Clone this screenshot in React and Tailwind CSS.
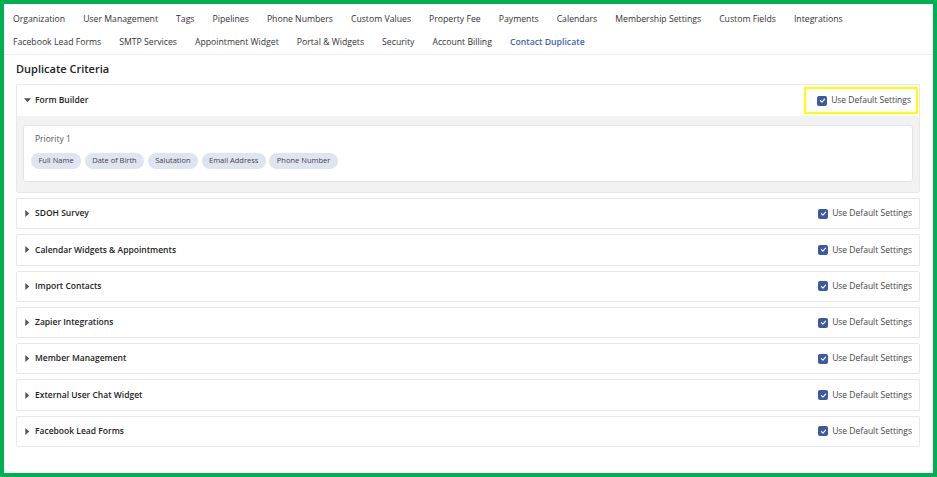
import React from 'react';

const tabsRow1 = ['Organization', 'User Management', 'Tags', 'Pipelines', 'Phone Numbers', 'Custom Values', 'Property Fee', 'Payments', 'Calendars', 'Membership Settings', 'Custom Fields', 'Integrations'];
const tabsRow2 = ['Facebook Lead Forms', 'SMTP Services', 'Appointment Widget', 'Portal & Widgets', 'Security', 'Account Billing', 'Contact Duplicate'];

const sections = ['SDOH Survey', 'Calendar Widgets & Appointments', 'Import Contacts', 'Zapier Integrations', 'Member Management', 'External User Chat Widget', 'Facebook Lead Forms'];

const chips = ['Full Name', 'Date of Birth', 'Salutation', 'Email Address', 'Phone Number'];

const Check = () => (
  <span className="w-[10px] h-[10px] rounded-[2px] bg-[#3d5a9e] flex items-center justify-center">
    <svg width="7" height="7" viewBox="0 0 10 10">
      <path d="M2 5.2 L4.2 7.3 L8 3" stroke="white" strokeWidth="1.6" fill="none" strokeLinecap="round" strokeLinejoin="round" />
    </svg>
  </span>
);

const DefaultToggle = () => (
  <div className="flex items-center gap-[4px]">
    <Check />
    <span className="text-[8.5px] text-[#444]">Use Default Settings</span>
  </div>
);

const Caret = ({ open }) => (
  <svg width="7" height="7" viewBox="0 0 8 8" className="text-[#555]">
    {open ? <path d="M0 1.5 H8 L4 6 Z" fill="currentColor" /> : <path d="M1.5 0 V8 L6 4 Z" fill="currentColor" />}
  </svg>
);

export default function App() {
  return (
    <div className="w-[937px] h-[477px] border-[4px] border-[#00b050] bg-white overflow-hidden" style={{ fontFamily: '"Open Sans", "Liberation Sans", sans-serif' }}>
      {/* tabs */}
      <div className="border-b border-[#eceef2] pl-[9px] pt-[4px]">
        <div className="h-[24px] flex items-center gap-[18px]">
          {tabsRow1.map((t) => (
            <span key={t} className="text-[8.7px] whitespace-nowrap text-[#333]">{t}</span>
          ))}
        </div>
        <div className="h-[22px] flex items-center gap-[18px]">
          {tabsRow2.map((t) => (
            <span key={t} className={`text-[8.7px] whitespace-nowrap ${t === 'Contact Duplicate' ? 'text-[#3f5fae] font-semibold' : 'text-[#333]'}`}>{t}</span>
          ))}
        </div>
      </div>

      <div className="pl-[12px] pr-[13px]">
        <h2 className="h-[29px] flex items-center text-[11px] font-semibold text-[#222]">Duplicate Criteria</h2>

        {/* open section */}
        <div className="border border-[#e6e8ee] rounded-[2px]">
          <div className="h-[31px] flex items-center justify-between pl-[7px] pr-[1px]">
            <div className="flex items-center gap-[4px]">
              <Caret open />
              <span className="text-[8.5px] font-semibold text-[#222]">Form Builder</span>
            </div>
            <div className="h-[27px] border-[2px] border-[#ffff00] flex items-center pl-[11px] pr-[5px]">
              <DefaultToggle />
            </div>
          </div>
          <div className="bg-[#f2f2f2] pt-[9px] px-[6px] pb-[10px]">
            <div className="bg-white border border-[#e3e5ea] rounded-[3px] h-[57px] pl-[7px] pt-[7px]">
              <div className="text-[8.5px] text-[#555] pl-[4px]">Priority 1</div>
              <div className="flex gap-[3.5px] mt-[7px]">
                {chips.map((c) => (
                  <span key={c} className="h-[16px] px-[7.5px] rounded-full bg-[#dfe4f1] text-[7.5px] text-[#444] flex items-center">{c}</span>
                ))}
              </div>
            </div>
          </div>
        </div>

        <div className="flex flex-col gap-[5px] mt-[5px]">
          {sections.map((s) => (
            <div key={s} className="h-[31.3px] border border-[#e6e8ee] rounded-[2px] flex items-center justify-between pl-[7px] pr-[7px]">
              <div className="flex items-center gap-[4px]">
                <Caret />
                <span className="text-[8.5px] font-semibold text-[#222]">{s}</span>
              </div>
              <DefaultToggle />
            </div>
          ))}
        </div>
      </div>
    </div>
  );
}
